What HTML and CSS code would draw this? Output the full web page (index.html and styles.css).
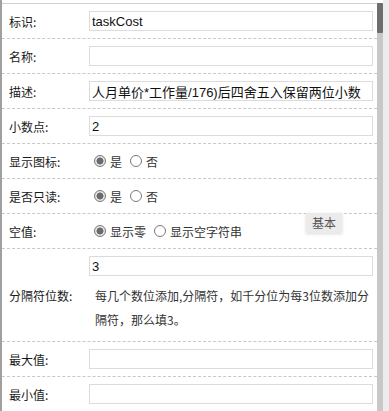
FILE: index.html
```html
<!DOCTYPE html>
<html lang="zh-CN">

<head>
    <meta charset="UTF-8">
    <meta name="viewport" content="width=device-width, initial-scale=1.0">
    <title>属性</title>
    <link rel="stylesheet" href="styles.css">
</head>

<body>
    <div class="page">
        <div class="panel">
            <div class="form">
                <div class="row">
                    <label class="name">标识:</label>
                    <div class="value"><input type="text" class="field" value="taskCost"></div>
                </div>
                <div class="row">
                    <label class="name">名称:</label>
                    <div class="value"><input type="text" class="field" value=""></div>
                </div>
                <div class="row">
                    <label class="name">描述:</label>
                    <div class="value"><input type="text" class="field" value="人月单价*工作量/176)后四舍五入保留两位小数"></div>
                </div>
                <div class="row">
                    <label class="name">小数点:</label>
                    <div class="value"><input type="text" class="field" value="2"></div>
                </div>
                <div class="row">
                    <label class="name">显示图标:</label>
                    <div class="value options">
                        <label class="opt"><input type="radio" name="icon" checked>是</label>
                        <label class="opt"><input type="radio" name="icon">否</label>
                    </div>
                </div>
                <div class="row">
                    <label class="name">是否只读:</label>
                    <div class="value options">
                        <label class="opt"><input type="radio" name="readonly" checked>是</label>
                        <label class="opt"><input type="radio" name="readonly">否</label>
                    </div>
                </div>
                <div class="row">
                    <label class="name">空值:</label>
                    <div class="value options">
                        <label class="opt"><input type="radio" name="empty" checked>显示零</label>
                        <label class="opt"><input type="radio" name="empty">显示空字符串</label>
                    </div>
                    <span class="tip">基本</span>
                </div>
                <div class="row tall">
                    <label class="name">分隔符位数:</label>
                    <div class="value">
                        <input type="text" class="field" value="3">
                        <p class="hint">每几个数位添加,分隔符，如千分位为每3位数添加分隔符，那么填3。</p>
                    </div>
                </div>
                <div class="row">
                    <label class="name">最大值:</label>
                    <div class="value"><input type="text" class="field" value=""></div>
                </div>
                <div class="row">
                    <label class="name">最小值:</label>
                    <div class="value"><input type="text" class="field" value=""></div>
                </div>
            </div>
        </div>
        <div class="scrollbar">
            <div class="thumb"></div>
        </div>
        <div class="gutter"></div>
    </div>
</body>

</html>
```

FILE: styles.css
```css
body {
    margin: 0;
    padding: 0;
    font-family: "Noto Sans CJK SC", sans-serif;
    font-size: 12px;
    color: #1a1a1a;
    background-color: #fff;
}

.page {
    display: flex;
    height: 411px;
    overflow: hidden;
}

.panel {
    width: 375px;
    border-left: 2px solid #a0a0a0;
    padding-top: 3px;
}

.form {
    border-top: 1px solid #d0d0d0;
}

/* each property is one row: label + value */
.row {
    position: relative;
    display: grid;
    grid-template-columns: 80px 284px;
    align-items: center;
    min-height: 34px;
    padding-left: 7px;
    border-bottom: 1px dashed #c8c8c8;
}

.name {
    white-space: nowrap;
}

.value {
    display: flex;
    flex-direction: column;
}

.field {
    box-sizing: border-box;
    width: 284px;
    height: 20px;
    margin: 0;
    padding: 0 2px;
    border: 1px solid #dcdcdc;
    font-family: "Liberation Sans", "Noto Sans CJK SC", sans-serif;
    font-size: 13px;
    color: #111;
    outline: none;
}

.options {
    flex-direction: row;
    align-items: center;
    gap: 8px;
    padding-left: 5px;
}

.opt {
    display: flex;
    align-items: center;
    gap: 4px;
    color: #333;
}

.opt input {
    appearance: none;
    -webkit-appearance: none;
    width: 12px;
    height: 12px;
    margin: 0;
    border: 1px solid #7a7a7a;
    border-radius: 50%;
    background-color: #fff;
}

.opt input:checked {
    border-color: #777;
    background: radial-gradient(circle, #6a6a6a 0, #6a6a6a 3.2px, #e6e6e6 3.8px);
}

.tall .value {
    padding: 7px 0 9px;
}

.hint {
    margin: 8px 0 0 6px;
    line-height: 24px;
    color: #333;
}

/* floating tab label */
.tip {
    position: absolute;
    left: 304px;
    top: -1px;
    padding: 1px 6px 2px;
    background-color: #ebebeb;
    color: #555;
    box-shadow: 0 1px 3px rgba(0, 0, 0, 0.15);
}

.scrollbar {
    width: 6px;
    margin-top: 3px;
    background-color: #c8c8c8;
}

.thumb {
    height: 30px;
    background-color: #6e6e6e;
    border-radius: 1px;
}

.gutter {
    width: 6px;
    background-color: #ececec;
}
```
